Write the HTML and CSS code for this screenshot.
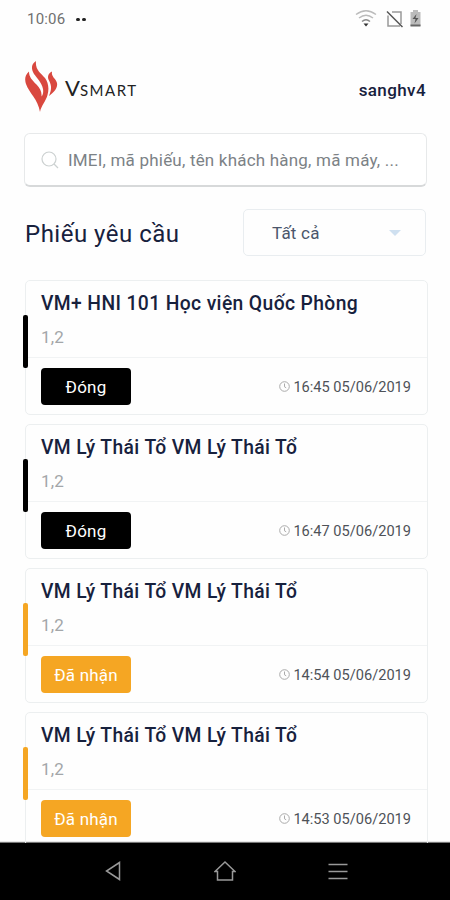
FILE: index.html
```html
<!DOCTYPE html>
<html lang="vi">
    <head>
        <meta charset="utf-8">
        <title>Vsmart</title>
        <link rel="stylesheet" href="styles.css">
    </head>
    <body>
        <div class="status-bar">
            <span class="clock">10:06</span>
            <span class="dots"><i></i><i></i></span>
            <svg class="status-icons" width="68" height="20" viewBox="0 0 68 20">
                <g fill="none" stroke="#bbb" stroke-width="1.500">
                    <path d="M1 5.500Q11 -2 21 5.500"/>
                    <path d="M4 9Q11 3.500 18 9"/>
                    <path d="M7 12.500Q11 9 15 12.500" stroke="#888"/>
                    <path d="M37 3h9v12M33 6.500v10.500h12" stroke="#999"/>
                    <path d="M32 2.500L47.500 18" stroke="#555"/>
                </g>
                <path d="M8.500 14.500h5L11 17.500z" fill="#333"/>
                <path d="M58 1h5v2h2.500v14h-10V3H58z" fill="#bbb"/>
                <path d="M55.500 15.500h10v2h-10z" fill="#666"/>
                <path d="M61.500 5l-4 5h3l-1 4.500 4-5.500h-3z" fill="#555"/>
            </svg>
        </div>
        <div class="header">
            <svg class="flame" width="34" height="52" viewBox="0 0 34 52" fill="#d9483f">
                <path d="M11 0C6 3 6 8 9 13C12 17 17 22 18 28C18.500 31 18 34 16.500 35.500C17 31 15 27 11.500 23.500C7 19 4 16 4 10.500C-1 15 0 20 1 23C4 32 13 38 15 51C16 45 21 40 22.500 34C24.500 27 23 21 20 17C16 12 10 9 11 0Z"/>
                <path d="M27 10.500C23 12.500 22 16 24 19.500C27 25 26.500 29 24 35C29 31 33 27 32 22C31 17.500 26 16 27 10.500Z"/>
            </svg>
            <span class="brand">V<small>SMART</small></span>
            <span class="user">sanghv4</span>
        </div>
        <div class="search">
            <svg width="18" height="18" viewBox="0 0 18 18" fill="none" stroke="#ccd1d1" stroke-width="1.200">
                <circle cx="8" cy="8" r="7"/>
                <path d="M13 13l4 4"/>
            </svg>
            <span>IMEI, mã phiếu, tên khách hàng, mã máy, ...</span>
        </div>
        <div class="filter">
            <h1>Phiếu yêu cầu</h1>
            <div class="select">
                <span>Tất cả</span>
                <i></i>
            </div>
        </div>
        <div class="list">
            <div class="card closed">
                <h2>VM+ HNI 101 Học viện Quốc Phòng</h2>
                <p>1,2</p>
                <div class="card-foot">
                    <span class="state">Đóng</span>
                    <svg class="time-icon" width="11" height="11" viewBox="0 0 11 11"><circle cx="5.500" cy="5.500" r="4.800"/><path d="M5.500 2.500v3.300l1.700 1"/></svg>
                    <span class="time">16:45 05/06/2019</span>
                </div>
            </div>
            <div class="card closed">
                <h2>VM Lý Thái Tổ VM Lý Thái Tổ</h2>
                <p>1,2</p>
                <div class="card-foot">
                    <span class="state">Đóng</span>
                    <svg class="time-icon" width="11" height="11" viewBox="0 0 11 11"><circle cx="5.500" cy="5.500" r="4.800"/><path d="M5.500 2.500v3.300l1.700 1"/></svg>
                    <span class="time">16:47 05/06/2019</span>
                </div>
            </div>
            <div class="card received">
                <h2>VM Lý Thái Tổ VM Lý Thái Tổ</h2>
                <p>1,2</p>
                <div class="card-foot">
                    <span class="state">Đã nhận</span>
                    <svg class="time-icon" width="11" height="11" viewBox="0 0 11 11"><circle cx="5.500" cy="5.500" r="4.800"/><path d="M5.500 2.500v3.300l1.700 1"/></svg>
                    <span class="time">14:54 05/06/2019</span>
                </div>
            </div>
            <div class="card received">
                <h2>VM Lý Thái Tổ VM Lý Thái Tổ</h2>
                <p>1,2</p>
                <div class="card-foot">
                    <span class="state">Đã nhận</span>
                    <svg class="time-icon" width="11" height="11" viewBox="0 0 11 11"><circle cx="5.500" cy="5.500" r="4.800"/><path d="M5.500 2.500v3.300l1.700 1"/></svg>
                    <span class="time">14:53 05/06/2019</span>
                </div>
            </div>
        </div>
        <div class="nav-bar">
            <svg width="22" height="22" viewBox="0 0 22 22"><path d="M18.500 2.500v17L5.500 11z"/></svg>
            <svg width="22" height="22" viewBox="0 0 22 22"><path d="M1 11.500L11 2l10 9.500h-2.500V20h-15v-8.500z"/></svg>
            <svg width="22" height="22" viewBox="0 0 22 22"><path d="M1.500 4.500h19M1.500 11.500h19M1.500 18.500h19"/></svg>
        </div>
    </body>
</html>
```
FILE: styles.css
```css
* {
    box-sizing: border-box;
}
body {
    margin: 0;
    height: 900px;
    overflow: hidden;
    display: flex;
    flex-direction: column;
    font-family: Roboto, "Noto Sans", sans-serif;
    background: #fefefe;
    color: #17213d;
}
h1, h2, p {
    margin: 0;
    font-weight: normal;
}
svg {
    display: block;
    flex: none;
}

/* status bar */
.status-bar {
    height: 38px;
    flex: none;
    display: flex;
    align-items: center;
    padding: 0 27px 0 27px;
}
.clock {
    width: 49px;
    font-size: 15px;
    letter-spacing: 0.2px;
    color: #707070;
}
.dots {
    display: flex;
    gap: 2px;
}
.dots i {
    width: 4px;
    height: 3px;
    border-radius: 2px;
    background: #222;
}
.status-icons {
    margin: -1px 0 0 auto;
}

/* header */
.header {
    height: 95px;
    flex: none;
    display: flex;
    padding: 23px 24px 0 25px;
}
.brand {
    margin: 13px 0 0 6px;
    font-family: Lato, sans-serif;
    font-size: 22px;
    line-height: 28px;
    color: #222;
}
.brand small {
    font-size: 15px;
    letter-spacing: 1.5px;
}
.user {
    margin: 17px 0 0 auto;
    font-size: 17px;
    line-height: 24px;
    font-weight: 500;
    letter-spacing: 0.4px;
}

/* search */
.search {
    height: 54px;
    flex: none;
    margin: 0 23px 0 24px;
    padding: 0 16px;
    display: flex;
    align-items: center;
    gap: 9px;
    border: 1px solid #e7e9ea;
    border-bottom: 2px solid #d7d9da;
    border-radius: 6px;
    background: #fff;
    font-size: 17px;
    letter-spacing: 0.2px;
    color: #7c8286;
    white-space: nowrap;
}

/* title + select */
.filter {
    flex: none;
    display: flex;
    justify-content: space-between;
    margin: 22px 24px 24px 25px;
    height: 47px;
}
.filter h1 {
    font-size: 24px;
    line-height: 50px;
    letter-spacing: 0.5px;
}
.select {
    width: 183px;
    padding: 0 24px 0 28px;
    display: flex;
    align-items: center;
    justify-content: space-between;
    border: 1px solid #e9edf0;
    border-radius: 5px;
    font-size: 17px;
    letter-spacing: 0.2px;
    color: #4b566b;
}
.select i {
    border: 6px solid transparent;
    border-top-color: #cfe0f0;
    border-bottom: 0;
}

/* cards */
.list {
    flex: 1;
    min-height: 0;
    overflow: hidden;
    padding: 0 22px 0 23px;
}
.card {
    position: relative;
    height: 135px;
    margin: 0 0 9px 2px;
    border: 1px solid #eceff0;
    border-radius: 5px;
}
.card::before {
    content: "";
    position: absolute;
    left: -3px;
    top: 34px;
    width: 5px;
    height: 53px;
    border-radius: 2px;
    background: #000;
}
.card h2 {
    padding: 10px 15px 0;
    font-size: 19.3px;
    line-height: 26px;
    font-weight: 500;
    letter-spacing: 0.38px;
    white-space: nowrap;
}
.card p {
    height: 41px;
    padding: 8px 15px 0;
    font-size: 17px;
    line-height: 24px;
    letter-spacing: 0.2px;
    color: #a3a6a9;
    border-bottom: 1px solid #f1f3f4;
}
.card-foot {
    display: flex;
    align-items: center;
    padding: 10px 16px 10px 15px;
}
.state {
    width: 90px;
    height: 37px;
    margin-right: auto;
    border-radius: 4px;
    background: #000;
    color: #fff;
    font-size: 17px;
    letter-spacing: 0.2px;
    line-height: 38px;
    text-align: center;
}
.received .state, .received::before {
    background: #f5a623;
}
.time-icon {
    margin: -1px 3px 0 0;
    fill: none;
    stroke: #aaa;
}
.time {
    font-size: 14.6px;
    line-height: 18px;
    color: #4e5258;
}

/* android nav */
.nav-bar {
    height: 57px;
    flex: none;
    display: flex;
    justify-content: center;
    gap: 91px;
    padding-top: 17px;
    background: #000;
    box-shadow: 0 -1px 1px #777;
}
.nav-bar svg {
    fill: none;
    stroke: #999;
    stroke-width: 1.5;
}
```
